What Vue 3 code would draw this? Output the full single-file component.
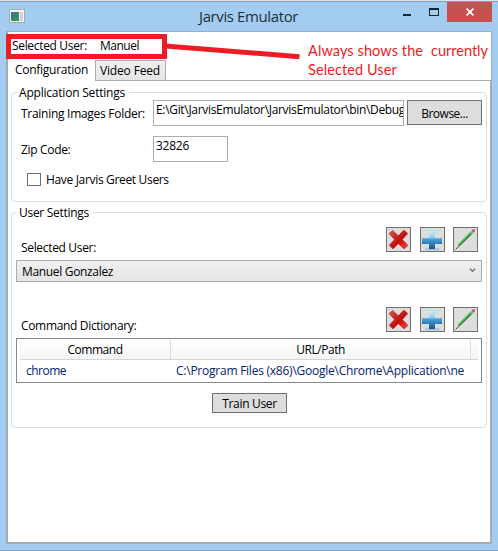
<script setup>
const toolbar = ['delete', 'add', 'edit']
const commands = [{ name: 'chrome', path: 'C:\\Program Files (x86)\\Google\\Chrome\\Application\\ne' }]
const imagesFolder = 'E:\\Git\\JarvisEmulator\\JarvisEmulator\\bin\\Debug'
</script>

<template>
  <div class="window">
    <svg class="defs" width="0" height="0" aria-hidden="true">
      <defs>
        <linearGradient id="red" x1="0" y1="0" x2="1" y2="1">
          <stop offset="0" stop-color="#d65a55" />
          <stop offset=".42" stop-color="#c5211f" />
          <stop offset=".55" stop-color="#c00d0d" />
          <stop offset="1" stop-color="#fb4a45" />
        </linearGradient>
        <linearGradient id="blue" x1="0" y1="0" x2="0" y2="1">
          <stop offset="0" stop-color="#d4f4ff" />
          <stop offset=".38" stop-color="#8fd0f2" />
          <stop offset=".5" stop-color="#4a9bd8" />
          <stop offset="1" stop-color="#0f549e" />
        </linearGradient>
        <linearGradient id="screen" x1="0" y1="0" x2="1" y2="1">
          <stop offset="0" stop-color="#3d6f8c" />
          <stop offset="1" stop-color="#3b9b62" />
        </linearGradient>
      </defs>
    </svg>

    <header class="titlebar">
      <svg class="app-icon" width="16" height="14" viewBox="0 0 16 14">
        <rect x=".5" y=".5" width="15" height="13" fill="#f4f5f6" stroke="#a5a9ad" />
        <rect x="2" y="3" width="8" height="9" fill="url(#screen)" />
        <rect x="11" y="3" width="3" height="9" fill="#cfd3d8" />
      </svg>
      <h1 class="title">Jarvis Emulator</h1>
      <i class="minimize"></i>
      <i class="maximize"></i>
      <button class="close">
        <svg width="8" height="8" viewBox="0 0 8 8"><path d="M.6 .6L7.4 7.4M7.4 .6L.6 7.4" stroke="#fff" stroke-width="1.6" /></svg>
      </button>
    </header>

    <main class="client">
      <div class="current"><span class="current-label">Selected User:</span><span class="current-name">Manuel</span></div>

      <nav class="tabs">
        <div class="tab active">Configuration</div>
        <div class="tab">Video Feed</div>
      </nav>

      <div class="page">
        <section class="group app-settings">
          <h2 class="legend legend-app">Application Settings</h2>
          <div class="row folder">
            <span class="label training">Training Images Folder:</span>
            <div class="input wide"><span class="path">{{ imagesFolder }}</span></div>
            <button class="btn browse">Browse...</button>
          </div>
          <div class="row zip">
            <span class="label">Zip Code:</span>
            <div class="input">32826</div>
          </div>
          <label class="check"><i class="box"></i>Have Jarvis Greet Users</label>
        </section>

        <section class="group user-settings">
          <h2 class="legend">User Settings</h2>
          <template v-for="part in ['user', 'commands']" :key="part">
            <div class="row head">
              <span class="label" :class="part">{{ part === 'user' ? 'Selected User:' : 'Command Dictionary:' }}</span>
              <div class="tools">
                <button v-for="icon in toolbar" :key="icon" class="tool" :class="icon">
                  <svg v-if="icon === 'delete'" width="23" height="23" viewBox="0 0 23 23">
                    <path d="M2 5.6L5.8 2.4 11.3 7.7 16.8 2.1 20.8 5.5 15.4 11.5 21 17.4 17.2 21 11.3 15.7 6 21 2.2 17.3 7.5 11.6Z" fill="url(#red)" stroke="#bd2220" stroke-width=".6" />
                  </svg>
                  <svg v-else-if="icon === 'add'" width="23" height="23" viewBox="0 0 23 23">
                    <ellipse cx="11.5" cy="21.3" rx="8" ry="1" fill="#b4b7ba" />
                    <path d="M8 2H14V10H21V16H14V21H8V16H1V10H8Z" fill="url(#blue)" />
                    <path d="M1.5 10.5H21" stroke="#65b2e3" stroke-width="1" />
                    <path d="M8.5 2.5H13.5V9" fill="none" stroke="#a4dcf5" />
                  </svg>
                  <svg v-else width="23" height="23" viewBox="0 0 23 23">
                    <path d="M2 21L4 17 5.8 18.7Z" fill="#b88b4e" />
                    <path d="M4.8 17.4L17.2 5" stroke="#227829" stroke-width="2.5" />
                    <path d="M4.4 17L16.8 4.6" stroke="#5fd05f" stroke-width="1.2" />
                    <path d="M17 5.2L19 3.2" stroke="#a0a5ad" stroke-width="2.8" />
                    <path d="M18.8 3.4L20.4 1.8" stroke="#cf5050" stroke-width="2.8" />
                    <path d="M1.6 21.4L3.2 19.8" stroke="#4d3b25" />
                  </svg>
                </button>
              </div>
            </div>
            <div v-if="part === 'user'" class="combo">
              <span>Manuel Gonzalez</span>
              <svg width="7" height="5" viewBox="0 0 7 5"><path d="M.9 .6L3.5 3.4 6.1 .6" fill="none" stroke="#606060" stroke-width="1.3" /></svg>
            </div>
            <div v-else class="table">
              <div class="thead"><span class="th command">Command</span><span class="th url">URL/Path</span><span class="th rest"></span></div>
              <div v-for="c in commands" :key="c.name" class="tr"><span class="td-name">{{ c.name }}</span><span class="td-path">{{ c.path }}</span></div>
            </div>
          </template>
          <button class="btn train">Train User</button>
        </section>
      </div>
    </main>

    <svg class="callout" width="498" height="70" viewBox="0 0 498 70">
      <rect x="8.5" y="36.5" width="156" height="20" fill="none" stroke="#ed1c24" stroke-width="5" />
      <path d="M165 46L297 56.5" stroke="#ed1c24" stroke-width="5" stroke-linecap="square" />
    </svg>
    <p class="note"><span class="n1">Always shows the</span><span class="n2">currently</span><br /><span class="n3">Selected User</span></p>
  </div>
</template>

<style>
body { margin: 0; overflow: hidden; }
</style>

<style scoped>
* { box-sizing: border-box; }
.window {
  position: relative;
  width: 498px;
  height: 551px;
  padding: 0 6px;
  background: #a2cdf0;
  border-top: 1px solid #dfe3e6;
  border-bottom: 1px solid #7ba2c2;
  box-shadow: inset 0 1px #7fa5c0;
  font: 12px/17px "Open Sans", "Liberation Sans", sans-serif;
  letter-spacing: -0.33px;
  color: #000;
}
.defs { position: absolute; }
button { margin: 0; padding: 0; font: inherit; letter-spacing: inherit; color: inherit; }
.titlebar { display: flex; align-items: flex-start; height: 30px; }
.app-icon { margin: 8px 0 0 3px; }
.title {
  margin: 5px 0 0 174px;
  width: 204px;
  font: 400 15px/20px "Open Sans", sans-serif;
  letter-spacing: -0.39px;
  color: #24303a;
}
.minimize { width: 8px; height: 2px; margin-top: 13px; background: #1c2329; }
.maximize { width: 10px; height: 8px; margin: 7px 0 0 18px; border: 1px solid #1c2329; border-top-width: 2px; }
.close {
  display: flex;
  align-items: center;
  justify-content: center;
  width: 45px;
  height: 20px;
  margin: 1px 0 0 8px;
  border: 0;
  background: #c75050;
}
.client {
  height: 513px;
  width: 486px;
  border: 1px solid #8fb0cc;
  border-left: 2px solid #9eacb9;
  border-right: 1px solid #9db0c0;
  border-bottom: 2px solid #a3abb1;
  background: #fff;
}
.current { display: flex; height: 28px; padding: 5px 0 0 4px; }
.current-label { width: 88px; }
.current-name { letter-spacing: -0.49px; }
.tabs { display: flex; height: 21px; }
.tab {
  width: 71px;
  height: 21px;
  padding: 1px 0 0 4px;
  border: 1px solid #acacac;
  background: linear-gradient(#f0f0f0, #e5e5e5);
  letter-spacing: -0.16px;
  white-space: nowrap;
}
.tab.active { width: 87px; padding: 1px 0 0 7px; border: 0; background: #fff; letter-spacing: -0.27px; }
.page {
  height: 461px;
  padding: 12px 3px 0 3px;
  border-right: 1px solid #acacac;
}
.page::before { content: ""; display: block; height: 1px; margin: -13px -4px 11px 155px; background: #acacac; }
.group { border: 1px solid #d5dfe5; border-radius: 4px; }
.app-settings { height: 110px; }
.user-settings { height: 216px; margin-top: 10px; }
.legend {
  width: 75px;
  height: 16px;
  margin: -9px 0 0 5px;
  padding-left: 2px;
  background: #fff;
  font: inherit;
  letter-spacing: -0.29px;
  white-space: nowrap;
}
.legend-app { width: 112px; letter-spacing: -0.21px; }
.row { display: flex; align-items: flex-start; }
.label { width: 132px; padding-top: 5px; white-space: nowrap; }
.training { letter-spacing: -0.28px; }
.folder, .zip { padding-left: 9px; }
.input {
  width: 75px;
  height: 26px;
  padding: 0 2px;
  border: 1px solid #abadb3;
  overflow: hidden;
  white-space: nowrap;
  letter-spacing: -0.26px;
}
.input.wide { width: 251px; padding-right: 0; }
.path { letter-spacing: -0.32px; }
.zip { margin-top: 10px; }
.btn { border: 1px solid #707070; background: #ddd; }
.browse { width: 75px; height: 25px; margin-left: 3px; padding-top: 2px; letter-spacing: -0.5px; }
.check { display: flex; align-items: flex-start; margin: 9px 0 0 15px; }
.box { width: 14px; height: 13px; margin: 2px 5px 0 0; border: 1px solid #707070; }
.user-settings .legend { margin-bottom: 7px; }
.head { justify-content: space-between; height: 33px; padding: 0 8px 0 9px; }
.head .label { padding-top: 12px; }
.tools { display: flex; }
.tool { width: 25px; height: 25px; border: 1px solid #707070; background: #ddd; }
.tool svg { display: block; }
.tool + .tool { margin-left: 9px; }
.tool.edit { margin-left: 8px; }
.combo {
  display: flex;
  align-items: flex-start;
  justify-content: space-between;
  width: 466px;
  height: 22px;
  margin: 0 0 25px 4px;
  padding: 2px 5px 0 5px;
  border: 1px solid #acacac;
  background: linear-gradient(#f0f0f0, #e5e5e5);
}
.combo svg { margin-top: 5px; }
.head .commands { padding-top: 10px; }
.table { width: 466px; height: 45px; margin: -2px 0 0 4px; padding: 1px 3px; border: 1px solid #828790; }
.thead {
  display: flex;
  height: 20px;
  border-bottom: 1px solid #d5d5d5;
  background: linear-gradient(#fff, #f4f5f6);
}
.th { border-right: 1px solid #dcdcdc; text-align: center; letter-spacing: -0.45px; padding-top: 1px; }
.th.command { width: 151px; }
.th.url { width: 300px; }
.th.rest { border: 0; }
.tr { display: flex; padding: 2px 0 0 6px; color: #042271; white-space: nowrap; }
.td-name { width: 150px; letter-spacing: -0.51px; }
.td-path { letter-spacing: -0.24px; }
.train { display: block; width: 75px; height: 20px; margin: 10px 0 0 200px; padding-top: 1px; }
.callout { position: absolute; left: 0; top: -1px; }
.note {
  position: absolute;
  left: 308px;
  top: 40px;
  margin: 0;
  font: 14.5px/19px Lato, "Open Sans", sans-serif;
  letter-spacing: 0.09px;
  color: #ed1c24;
  white-space: nowrap;
}
.n1 { display: inline-block; width: 123px; }
.n2 { letter-spacing: 0; }
</style>
